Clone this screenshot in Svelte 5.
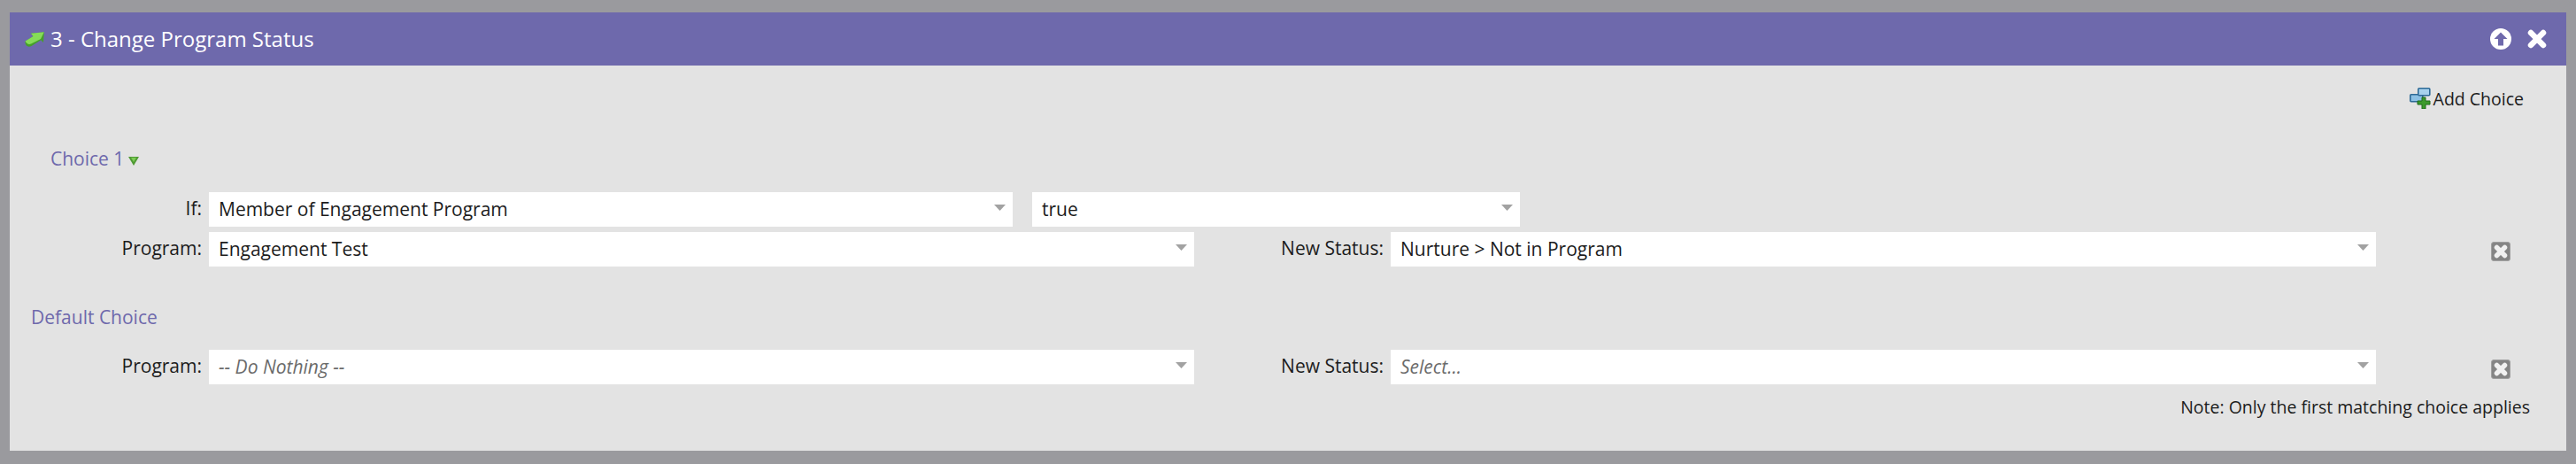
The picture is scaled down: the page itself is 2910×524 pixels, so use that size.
<script>
  const caret = "M0 0h13l-6.5 7z";
</script>

{#snippet select(text, width, placeholder = false)}
  <div class="select" style="width: {width}px">
    <span class:placeholder>{text}</span>
    <svg class="caret" width="13" height="7" viewBox="0 0 13 7"><path d={caret} fill="#a2a2a2" /></svg>
  </div>
{/snippet}

{#snippet removeIcon()}
  <svg class="remove" width="22" height="22" viewBox="0 0 22 22">
    <rect x="0.5" y="0.5" width="21" height="21" rx="2.5" fill="#858585" stroke="#a0a0a0" />
    <path d="M6.500 6.500l9 9M15.500 6.500l-9 9" stroke="#f1f1f1" stroke-width="5.500" stroke-linecap="round" />
  </svg>
{/snippet}

<div class="panel">
  <header>
    <div class="title">
      <svg width="22" height="17" viewBox="0 0 22 17">
        <path d="M0.500 10.500L9.500 5 7 1.800 21.800 0.300 21 12 18.200 9.300 7.500 16Q4 17.500 1.800 15.500 0 13 0.500 10.500Z" fill="#45a02a" />
        <path d="M0.500 10.500L9.500 5 7 1.800 21.800 0.300 18 8 7 13.500Q3 15 0.500 10.500Z" fill="#86dc58" />
      </svg>
      <span>3 - Change Program Status</span>
    </div>
    <div class="actions">
      <svg width="24" height="24" viewBox="0 0 24 24">
        <circle cx="12" cy="12" r="12" fill="#fff" />
        <path d="M12 4.500L19.500 12h-4.500v7.500H9V12H4.500z" fill="#6e69ac" />
      </svg>
      <svg width="22" height="22" viewBox="0 0 22 22">
        <path d="M4 4l14 14M18 4L4 18" stroke="#fff" stroke-width="6.500" stroke-linecap="round" />
      </svg>
    </div>
  </header>

  <div class="toolbar">
    <button class="add">
      <svg width="24" height="24" viewBox="0 0 24 24">
        <rect x="0.800" y="7.800" width="14" height="8" rx="1" fill="#8cc0e4" stroke="#2e6a96" stroke-width="1.600" />
        <rect x="9.800" y="0.800" width="13" height="8" rx="1" fill="#a8d2ee" stroke="#2e6a96" stroke-width="1.600" />
        <path d="M14 11h4v4h5v4h-5v5h-4v-5H9v-4h5z" fill="#3c9a2c" stroke="#1f6a1a" />
      </svg>
      <span>Add Choice</span>
    </button>
  </div>

  <div class="heading choice">
    Choice 1
    <svg width="12" height="10" viewBox="0 0 12 10"><path d="M0 0h12L6 10z" fill="#4f9a33" /><path d="M3 1h6L6 6z" fill="#7ccc55" /></svg>
  </div>

  <div class="row if-row">
    <label>If:</label>
    {@render select("Member of Engagement Program", 908)}
    {@render select("true", 551)}
  </div>
  <div class="row status-row">
    <label>Program:</label>
    {@render select("Engagement Test", 1113)}
    <label class="status-label">New Status:</label>
    {@render select("Nurture > Not in Program", 1113)}
    {@render removeIcon()}
  </div>

  <div class="heading fallback">Default Choice</div>

  <div class="row status-row">
    <label>Program:</label>
    {@render select("-- Do Nothing --", 1113, true)}
    <label class="status-label">New Status:</label>
    {@render select("Select...", 1113, true)}
    {@render removeIcon()}
  </div>

  <p class="note">Note: Only the first matching choice applies</p>
</div>

<style>
  :global(body) {
    background: #9a9a9e;
  }

  .panel {
    margin: 14px 11px 15px;
    width: 2888px;
    height: 495px;
    background: #e3e3e3;
    font-family: "Open Sans", sans-serif;
    font-size: 21px;
    color: #1c1c1c;
    overflow: hidden;
  }

  header {
    height: 60px;
    background: #6e69ac;
    color: #fff;
    display: flex;
    align-items: center;
    justify-content: space-between;
    padding: 0 22px 0 17px;
  }

  .title {
    display: flex;
    align-items: center;
    gap: 7px;
    font-size: 24px;
  }

  .title span {
    position: relative;
    top: -1px;
  }

  .actions {
    display: flex;
    align-items: center;
    gap: 18px;
  }

  .toolbar {
    display: flex;
    justify-content: flex-end;
    padding: 24px 48px 0 0;
    height: 54px;
    box-sizing: border-box;
  }

  .add {
    display: flex;
    align-items: center;
    gap: 3px;
    border: 0;
    padding: 0;
    background: none;
    font: inherit;
    font-size: 19.500px;
    color: inherit;
    height: 26px;
  }

  .heading {
    color: #6e69ac;
    line-height: 30px;
  }

  .choice {
    margin: 36px 0 0 46px;
  }

  .choice svg {
    margin-left: -1px;
  }

  .fallback {
    margin: 42px 0 0 24px;
  }

  .row {
    display: flex;
    align-items: center;
    height: 39px;
  }

  .if-row {
    margin-top: 23px;
  }

  .if-row .select + .select {
    margin-left: 22px;
  }

  .status-row {
    margin-top: 6px;
  }

  .fallback + .status-row {
    margin-top: 22px;
  }

  label {
    width: 217px;
    margin-right: 8px;
    text-align: right;
    line-height: 36px;
    height: 39px;
  }

  .status-label {
    width: 214px;
    margin-right: 8px;
    flex: none;
  }

  .select {
    flex: none;
    height: 39px;
    background: #fff;
    display: flex;
    align-items: center;
    justify-content: space-between;
    padding: 0 8px 0 11px;
    box-sizing: border-box;
  }

  .select span {
    position: relative;
    top: -1px;
  }

  .caret {
    margin-bottom: 4px;
  }

  .placeholder {
    font-style: italic;
    color: #6b6b6b;
  }

  .remove {
    margin: 4px 0 0 130px;
  }

  .note {
    margin: 10px 41px 0 0;
    text-align: right;
    font-size: 19.500px;
    line-height: 32px;
  }
</style>
